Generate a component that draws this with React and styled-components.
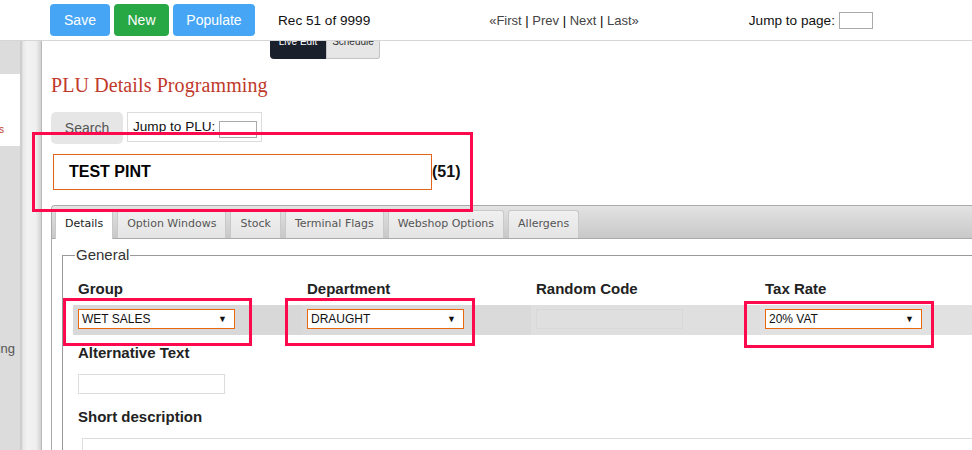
import React from 'react';
import styled, {createGlobalStyle} from 'styled-components';

const Global = createGlobalStyle`
	html, body {
		margin: 0;
		padding: 0;
		background: #fff;
		overflow: hidden;
		font-family: "Liberation Sans", Arial, sans-serif;
	}
`;

const Page = styled.div`
	position: relative;
	width: 972px;
	height: 450px;
	overflow: hidden;
`;

const TopBar = styled.header`
	position: relative;
	z-index: 2;
	display: flex;
	align-items: center;
	height: 40px;
	padding-left: 50px;
	background: #fff;
	border-bottom: 1px solid #d6d6d6;
`;

const BarButton = styled.button`
	height: 32px;
	width: ${p => p.$w}px;
	margin-right: 4px;
	border: 0;
	border-radius: 4px;
	background: ${p => (p.$green ? '#28a745' : '#46a6f5')};
	color: #fff;
	font: 14px "Liberation Sans", Arial, sans-serif;
	padding: 0;
`;

const RecText = styled.span`
	margin-left: 19px;
	font-size: 13.6px;
	color: #111;
`;

const Pager = styled.nav`
	margin-left: 119px;
	font-size: 13px;
	color: #000;
	white-space: nowrap;
	a {
		color: #444;
		text-decoration: none;
	}
`;

const JumpPage = styled.label`
	display: flex;
	align-items: center;
	margin-left: 110px;
	font-size: 13.6px;
	color: #111;
	white-space: nowrap;
`;

const SmallInput = styled.input`
	width: ${p => p.$w}px;
	height: ${p => p.$h}px;
	margin: ${p => p.$mt || 0}px 0 0 4px;
	padding: 0;
	border: 1px solid #aaa;
	box-sizing: border-box;
`;

const Body = styled.div`
	display: flex;
	height: 409px;
`;

const Sidebar = styled.aside`
	width: 20px;
	flex-shrink: 0;
	background: #dcdcdc;
	overflow: hidden;
`;

const SideItem = styled.div`
	display: flex;
	justify-content: flex-end;
	align-items: flex-end;
	height: ${p => p.$h}px;
	box-sizing: border-box;
	padding: 0 ${p => p.$pr || 0}px ${p => p.$pb || 0}px 0;
	background: ${p => p.$bg || 'transparent'};
	color: ${p => p.$color || '#555'};
	font-size: ${p => p.$size || 13}px;
	white-space: nowrap;
	overflow: hidden;
`;

const Strip = styled.div`
	width: 20px;
	flex-shrink: 0;
	background: linear-gradient(to right, #c6c6c6 0, #e8e8e8 2px, #f2f2f2 6px, #efefef 15px, #d2d2d2 20px);
	border-right: 1px solid #b9b9b9;
	border-left: 1px solid #cfcfcf;
`;

const Main = styled.main`
	flex: 1;
	padding-left: 9px;
	min-width: 0;
`;

const Toggle = styled.div`
	display: flex;
	margin-left: 219px;
	margin-top: -13px;
	height: 31px;
`;

const ToggleBtn = styled.div`
	width: ${p => p.$w}px;
	display: flex;
	align-items: flex-start;
	justify-content: center;
	padding-top: 8px;
	box-sizing: border-box;
	font-size: 10px;
	background: ${p => (p.$active ? '#1b212c' : '#e6e6e6')};
	color: ${p => (p.$active ? '#fff' : '#333')};
	border: ${p => (p.$active ? 'none' : '1px solid #c4c4c4')};
	border-top: 0;
	border-radius: ${p => (p.$active ? '0 0 0 4px' : '0 0 3px 0')};
`;

const Title = styled.h1`
	margin: 14px 0 0;
	font: 400 20px/24px "Liberation Serif", "DejaVu Serif", serif;
	color: #c0392b;
	letter-spacing: 0.1px;
`;

const SearchRow = styled.div`
	display: flex;
	margin-top: 15px;
	gap: 4px;
`;

const SearchButton = styled.button`
	width: 72px;
	height: 32px;
	border: 0;
	border-radius: 5px;
	background: #e6e6e6;
	color: #555;
	font: 14px "Liberation Sans", Arial, sans-serif;
	padding: 0;
`;

const JumpBox = styled.label`
	display: flex;
	align-items: flex-start;
	height: 30px;
	box-sizing: border-box;
	border: 1px solid #dcdcdc;
	padding: 6px 4px 0 5px;
	font-size: 13.6px;
	color: #111;
	white-space: nowrap;
`;

const NameRow = styled.div`
	display: flex;
	align-items: center;
	margin-top: 10px;
	margin-left: 2px;
`;

const NameInput = styled.div`
	width: 379px;
	height: 36px;
	box-sizing: border-box;
	border: 1px solid #e0651a;
	padding-left: 15px;
	display: flex;
	align-items: center;
	font-size: 16px;
	font-weight: 700;
	color: #000;
`;

const NameId = styled.span`
	font-size: 16px;
	font-weight: 700;
	color: #111;
`;

const Tabs = styled.section`
	margin-top: 15px;
	height: 260px;
	border: 1px solid #aaa;
	border-right: 0;
	border-bottom: 0;
	border-top-left-radius: 4px;
`;

const TabBar = styled.ul`
	display: flex;
	gap: 4px;
	margin: 0;
	padding: 4px 3px 0;
	height: 33px;
	box-sizing: border-box;
	list-style: none;
	background: linear-gradient(#e3e3e3, #c8c8c8);
	border-bottom: 1px solid #aaa;
	border-top-left-radius: 4px;
`;

const Tab = styled.li`
	height: ${p => (p.$active ? 29 : 28)}px;
	box-sizing: border-box;
	padding: 6px 9px 0;
	font: 11px "DejaVu Sans", Verdana, sans-serif;
	color: ${p => (p.$active ? '#222' : '#555')};
	background: ${p => (p.$active ? '#fff' : 'linear-gradient(#f0f0f0, #e4e4e4)')};
	border: 1px solid #c9c9c9;
	border-bottom: 0;
	border-radius: 3px 3px 0 0;
	white-space: nowrap;
`;

const Panel = styled.div`
	padding: 7px 0 0 10px;
	background: #fff;
`;

const Fieldset = styled.fieldset`
	margin: 0;
	padding: 16px 0 0 10px;
	border: 1px solid #9a9a9a;
	border-right: 0;
	border-bottom: 0;
	min-width: 0;
`;

const Legend = styled.legend`
	padding: 0 1px;
	margin-left: 2px;
	font-size: 15px;
	line-height: 18px;
	color: #333;
`;

const FieldGrid = styled.div`
	display: grid;
	grid-template-columns: repeat(4, 229px) 1fr;
`;

const Label = styled.div`
	padding: 0 0 7px 5px;
	font-size: 15px;
	line-height: 18px;
	font-weight: 700;
	color: #222;
`;

const Cell = styled.div`
	height: 30px;
	padding: 4px 5px;
	box-sizing: border-box;
	background: ${p => p.$bg};
`;

const Select = styled.div`
	width: 157px;
	height: 20px;
	box-sizing: border-box;
	border: 1px solid #e8670f;
	background: #fff;
	display: flex;
	align-items: center;
	justify-content: space-between;
	padding: 0 7px 0 3px;
	font-size: 12px;
	color: #111;
`;

const Arrow = styled.span`
	font-size: 9px;
	color: #111;
`;

const FaintInput = styled.div`
	width: 147px;
	height: 20px;
	box-sizing: border-box;
	border: 1px solid #d8d8d8;
`;

const Block = styled.div`
	margin-top: ${p => p.$mt || 0}px;
`;

const TextInput = styled.div`
	width: 147px;
	height: 20px;
	box-sizing: border-box;
	border: 1px solid #ddd;
	margin-left: 5px;
`;

const TextArea = styled.div`
	height: 40px;
	margin-left: 9px;
	border: 1px solid #ddd;
	border-right: 0;
`;

const Mark = styled.div`
	position: absolute;
	z-index: 5;
	top: ${p => p.$y}px;
	left: ${p => p.$x}px;
	width: ${p => p.$w}px;
	height: ${p => p.$h}px;
	box-sizing: border-box;
	border: 3px solid #fd0a4e;
	pointer-events: none;
`;

const tabs = ['Details', 'Option Windows', 'Stock', 'Terminal Flags', 'Webshop Options', 'Allergens'];

const fields = [
	{label: 'Group', value: 'WET SALES', bg: '#d8d8d8'},
	{label: 'Department', value: 'DRAUGHT', bg: '#dadada'},
	{label: 'Random Code', value: null, bg: '#dfdfdf'},
	{label: 'Tax Rate', value: '20% VAT', bg: '#e1e1e1'}
];

export default function App() {
	return (
		<Page>
			<Global />
			<TopBar>
				<BarButton $w={60}>Save</BarButton>
				<BarButton $w={55} $green>New</BarButton>
				<BarButton $w={82}>Populate</BarButton>
				<RecText>Rec 51 of 9999</RecText>
				<Pager>
					<a href="#">«First</a> | <a href="#">Prev</a> | <a href="#">Next</a> | <a href="#">Last»</a>
				</Pager>
				<JumpPage>
					Jump to page:
					<SmallInput $w={34} $h={17} />
				</JumpPage>
			</TopBar>
			<Body>
				<Sidebar>
					<SideItem $h={33} />
					<SideItem $h={72} $bg="#fff" $color="#c0392b" $size={10} $pr={16} $pb={11}>
						Items
					</SideItem>
					<SideItem $h={210} $pr={5}>Programming</SideItem>
				</Sidebar>
				<Strip />
				<Main>
					<Toggle>
						<ToggleBtn $w={56} $active>Live Edit</ToggleBtn>
						<ToggleBtn $w={54}>Schedule</ToggleBtn>
					</Toggle>
					<Title>PLU Details Programming</Title>
					<SearchRow>
						<SearchButton>Search</SearchButton>
						<JumpBox>
							Jump to PLU:
							<SmallInput $w={38} $h={17} $mt={2} />
						</JumpBox>
					</SearchRow>
					<NameRow>
						<NameInput>TEST PINT</NameInput>
						<NameId>(51)</NameId>
					</NameRow>
					<Tabs>
						<TabBar>
							{tabs.map((t, i) => (
								<Tab key={t} $active={i === 0}>{t}</Tab>
							))}
						</TabBar>
						<Panel>
							<Fieldset>
								<Legend>General</Legend>
								<FieldGrid>
									{fields.map(f => <Label key={f.label}>{f.label}</Label>)}
									<div />
									{fields.map(f => (
										<Cell key={f.label} $bg={f.bg}>
											{f.value ? (
												<Select>
													{f.value}
													<Arrow>▼</Arrow>
												</Select>
											) : (
												<FaintInput />
											)}
										</Cell>
									))}
									<Cell $bg="#e2e2e2" />
								</FieldGrid>
								<Block $mt={9}>
									<Label>Alternative Text</Label>
									<Block $mt={5}>
										<TextInput />
									</Block>
								</Block>
								<Block $mt={14}>
									<Label>Short description</Label>
									<Block $mt={5}>
										<TextArea />
									</Block>
								</Block>
							</Fieldset>
						</Panel>
					</Tabs>
				</Main>
			</Body>
			<Mark $x={32} $y={132} $w={441} $h={80} />
			<Mark $x={63} $y={298} $w={189} $h={48} />
			<Mark $x={285} $y={298} $w={190} $h={48} />
			<Mark $x={744} $y={301} $w={190} $h={47} />
		</Page>
	);
}
